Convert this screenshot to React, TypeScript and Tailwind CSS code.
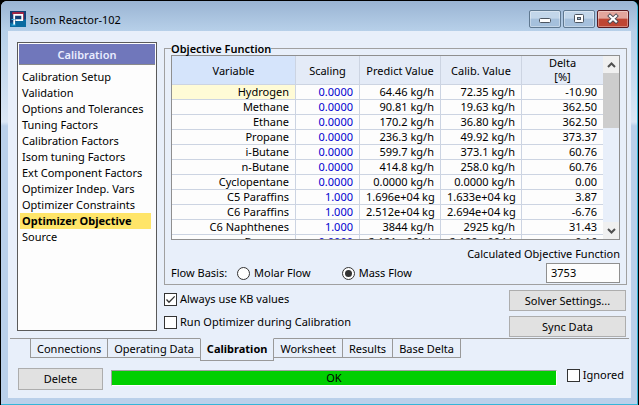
import { useState, type ReactNode } from "react";

const MENU = [
  "Calibration Setup",
  "Validation",
  "Options and Tolerances",
  "Tuning Factors",
  "Calibration Factors",
  "Isom tuning Factors",
  "Ext Component Factors",
  "Optimizer Indep. Vars",
  "Optimizer Constraints",
  "Optimizer Objective",
  "Source",
];

const ROWS = [
  ["Hydrogen", "0.0000", "64.46 kg/h", "72.35 kg/h", "-10.90"],
  ["Methane", "0.0000", "90.81 kg/h", "19.63 kg/h", "362.50"],
  ["Ethane", "0.0000", "170.2 kg/h", "36.80 kg/h", "362.50"],
  ["Propane", "0.0000", "236.3 kg/h", "49.92 kg/h", "373.37"],
  ["i-Butane", "0.0000", "599.7 kg/h", "373.1 kg/h", "60.76"],
  ["n-Butane", "0.0000", "414.8 kg/h", "258.0 kg/h", "60.76"],
  ["Cyclopentane", "0.0000", "0.0000 kg/h", "0.0000 kg/h", "0.00"],
  ["C5 Paraffins", "1.000", "1.696e+04 kg", "1.633e+04 kg", "3.87"],
  ["C6 Paraffins", "1.000", "2.512e+04 kg", "2.694e+04 kg", "-6.76"],
  ["C6 Naphthenes", "1.000", "3844 kg/h", "2925 kg/h", "31.43"],
  ["Benzene", "0.0000", "2.121e-004 k", "2.120e-004 k", "0.16"],
];

const TABS = ["Connections", "Operating Data", "Calibration", "Worksheet", "Results", "Base Delta"];

function CheckBox({ label, checked = false }: { label: string; checked?: boolean }) {
  return (
    <label className="flex items-center gap-[3px]">
      <span className="grid size-[13px] shrink-0">
        <input
          type="checkbox"
          defaultChecked={checked}
          className="peer m-0 size-[13px] appearance-none border border-[#333] bg-white [grid-area:1/1]"
        />
        <svg
          viewBox="0 0 13 13"
          className="pointer-events-none invisible size-[13px] [grid-area:1/1] peer-checked:visible"
          fill="none"
          stroke="#333"
          strokeWidth="1.3"
        >
          <path d="M2.5 6.5 5 9.2 10.7 3.4" />
        </svg>
      </span>
      {label}
    </label>
  );
}

function Radio({ label, checked = false }: { label: string; checked?: boolean }) {
  return (
    <label className="flex items-center gap-1">
      <span className="grid size-[13px] shrink-0 place-items-center">
        <input
          type="radio"
          name="flow-basis"
          defaultChecked={checked}
          className="peer m-0 size-[13px] appearance-none rounded-full border border-[#333] bg-white [grid-area:1/1]"
        />
        <span className="pointer-events-none invisible size-[7px] rounded-full bg-[#333] [grid-area:1/1] peer-checked:visible" />
      </span>
      {label}
    </label>
  );
}

function PushButton({ children, className }: { children: ReactNode; className: string }) {
  return (
    <button type="button" className={`border border-[#adadad] bg-[#e1e1e1] text-center ${className}`}>
      {children}
    </button>
  );
}

function TitleButton({ label, danger = false, children }: { label: string; danger?: boolean; children: ReactNode }) {
  const skin = danger
    ? "border-[#5a1a20] bg-linear-to-b from-[#e3a59c] from-45% to-[#bf4634] to-50%"
    : "border-[#5f7890] bg-linear-to-b from-[#c2d6ea] from-45% to-[#a5c0dc] to-50%";
  return (
    <button
      type="button"
      aria-label={label}
      className={`flex h-[18px] w-8 items-center justify-center rounded-xs border shadow-[inset_0_0_0_1px_rgba(255,255,255,0.35)] ${skin}`}
    >
      {children}
    </button>
  );
}

function TitleBar() {
  return (
    <header className="flex h-[30px] items-start rounded-t-md bg-linear-to-b from-[#9ab4d3] to-[#b7d0e9] pt-[9px] pr-2 pl-[9px]">
      <svg viewBox="0 0 16 16" className="mt-px mr-1 size-4">
        <rect width="16" height="16" fill="#123f76" />
        <path d="M0 12 16 8v8H0z" fill="#0b6ba0" />
        <path d="M3 3.5V2h10v7" fill="none" stroke="#c8203a" strokeWidth="1.4" />
        <path d="M4.2 14V3.8h8v5.4H5.5" fill="none" stroke="#fff" strokeWidth="1.8" />
        <path d="M1.5 8.5h3M1.5 14h4" stroke="#35b6e8" strokeWidth="1.2" />
      </svg>
      <h1 className="mt-px flex-1 leading-[18px]">Isom Reactor-102</h1>
      <div className="flex gap-0.5">
        <TitleButton label="Minimize">
          <svg viewBox="0 0 12 6" className="mt-1 h-1.5 w-3">
            <rect x="0.5" y="0.5" width="11" height="4" rx="1" fill="#fff" stroke="#4c5560" />
          </svg>
        </TitleButton>
        <TitleButton label="Maximize">
          <svg viewBox="0 0 12 10" className="h-2.5 w-3">
            <rect x="1.5" y="0.5" width="9" height="8" rx="1" fill="#fff" stroke="#4c5560" />
            <rect x="4.5" y="3.5" width="3" height="2" fill="#9fb8d0" stroke="#4c5560" />
          </svg>
        </TitleButton>
        <TitleButton label="Close" danger>
          <svg viewBox="0 0 14 12" className="h-3 w-3.5" strokeLinecap="square">
            <path d="m4 3 6 5.5M10 3 4 8.500" stroke="#4c4a55" strokeWidth="4" />
            <path d="m4 3 6 5.5M10 3 4 8.500" stroke="#fff" strokeWidth="2.2" />
          </svg>
        </TitleButton>
      </div>
    </header>
  );
}

function Sidebar() {
  const [current, setCurrent] = useState("Optimizer Objective");
  return (
    <nav className="mb-1.5 w-[140px] shrink-0 border border-[#5a5a5a] bg-[#fdfdfd] p-px">
      <h2 className="h-[21px] border-b border-[#8a8a8a] bg-[#7077bb] text-center leading-[21px] font-semibold text-[#e9ecff]">
        Calibration
      </h2>
      <ul className="pt-1 pr-1 pl-px">
        {MENU.map((item) => (
          <li key={item}>
            <button
              type="button"
              onClick={() => setCurrent(item)}
              className={`block h-4 w-full pl-0.5 text-left leading-4 whitespace-nowrap ${item === current ? "bg-[#ffe569] font-bold" : ""}`}
            >
              {item}
            </button>
          </li>
        ))}
      </ul>
    </nav>
  );
}

function ObjectiveTable() {
  const head = "border-r border-b border-[#ccd4e2] p-0 font-normal leading-[15px]";
  const cell = "border-r border-b border-[#ccd4e2] p-0 pr-1.5 pl-1.5 whitespace-nowrap overflow-hidden";
  return (
    <div className="flex h-[185px] border border-[#8f8f8f] bg-[#fdfdfd]">
      <div className="min-w-0 flex-1 overflow-hidden">
        <table className="w-full table-fixed border-separate border-spacing-0 text-right leading-[14px]">
          <colgroup>
            <col />
            <col className="w-16" />
            <col className="w-[81px]" />
            <col className="w-[81px]" />
            <col className="w-[81px]" />
          </colgroup>
          <thead className="bg-[#e4ebf7] text-center">
            <tr className="h-[29px]">
              <th className={`${head} bg-[#d5e4fb]`}>Variable</th>
              <th className={head}>Scaling</th>
              <th className={head}>Predict Value</th>
              <th className={head}>Calib. Value</th>
              <th className="border-b border-[#ccd4e2] p-0 leading-[14px] font-normal">
                Delta
                <br />
                [%]
              </th>
            </tr>
          </thead>
          <tbody>
            {ROWS.map(([name, scaling, predict, calib, delta], i) => (
              <tr key={name}>
                <td className={`${cell} ${i === 0 ? "bg-[#fffbd6]" : ""}`}>{name}</td>
                <td className={`${cell} text-[#0000d0]`}>{scaling}</td>
                <td className={cell}>{predict}</td>
                <td className={cell}>{calib}</td>
                <td className="border-b border-[#ccd4e2] p-0 pr-1.5">{delta}</td>
              </tr>
            ))}
          </tbody>
        </table>
      </div>
      <div className="flex w-4 flex-col bg-[#e8effa]">
        <button type="button" aria-label="Scroll up" className="flex h-[17px] items-center justify-center bg-[#f0f0f0]">
          <svg viewBox="0 0 9 6" className="h-1.5 w-[9px]" fill="none" stroke="#505050" strokeWidth="2">
            <path d="m1 5 3.5-3.5L8 5" />
          </svg>
        </button>
        <div className="h-[55px] bg-[#cdcdcd]" />
        <div className="flex-1" />
        <button type="button" aria-label="Scroll down" className="flex h-[17px] items-center justify-center bg-[#f0f0f0]">
          <svg viewBox="0 0 9 6" className="h-1.5 w-[9px]" fill="none" stroke="#505050" strokeWidth="2">
            <path d="m1 1 3.5 3.5L8 1" />
          </svg>
        </button>
      </div>
    </div>
  );
}

function ObjectivePanel() {
  return (
    <section className="min-w-0 flex-1">
      <fieldset className="min-w-0 border border-[#a0a0a0] px-1.5 pb-px">
        <legend className="h-[13px] leading-[13px] font-semibold">Objective Function</legend>
        <ObjectiveTable />
        <div className="flex items-end justify-between pt-[7px]">
          <div className="flex items-center pb-[3px] leading-[14px]">
            <span className="w-[66px]">Flow Basis:</span>
            <div className="flex gap-[31px]">
              <Radio label="Molar Flow" />
              <Radio label="Mass Flow" checked />
            </div>
          </div>
          <div className="flex flex-col items-end gap-0.5 leading-[14px]">
            <label htmlFor="objective">Calculated Objective Function</label>
            <input
              id="objective"
              defaultValue="3753"
              className="h-5 w-[74px] border border-[#8f8f8f] bg-[#fdfdfd] px-1 pb-0.5 leading-[14px]"
            />
          </div>
        </div>
      </fieldset>
      <div className="flex justify-between pt-[5px]">
        <div className="flex flex-col gap-[9px] pt-[2px] leading-[14px]">
          <CheckBox label="Always use KB values" checked />
          <CheckBox label="Run Optimizer during Calibration" />
        </div>
        <div className="flex flex-col gap-[5px] pr-px">
          <PushButton className="h-[21px] w-[117px]">Solver Settings...</PushButton>
          <PushButton className="h-[21px] w-[117px]">Sync Data</PushButton>
        </div>
      </div>
    </section>
  );
}

function TabStrip() {
  const [active, setActive] = useState("Calibration");
  return (
    <div role="tablist" className="flex items-start px-0.5 leading-[14px]">
      <div className="w-5 border-t border-[#999]" />
      {TABS.map((tab, i) => {
        const on = tab === active;
        const afterActive = TABS[i - 1] === active;
        const skin = on
          ? "h-[23px] border-x border-t border-t-transparent pt-px pb-0.5 font-bold"
          : afterActive
            ? "h-5 border-t pt-px"
            : "h-5 border-t border-l pt-px";
        const last = i === TABS.length - 1 ? "border-r" : "";
        return (
          <button
            key={tab}
            type="button"
            role="tab"
            aria-selected={on}
            onClick={() => setActive(tab)}
            className={`border-b border-[#999] px-1.5 whitespace-nowrap ${skin} ${last}`}
          >
            {tab}
          </button>
        );
      })}
      <div className="flex-1 border-t border-[#999]" />
    </div>
  );
}

export default function App() {
  return (
    <div
      className="w-full bg-black p-px text-[11px] leading-[14px] text-black"
      style={{ fontFamily: '"Noto Sans", "Open Sans", sans-serif' }}
    >
      <div className="rounded-t-md border-r border-b border-[#35b5d8] bg-linear-to-b from-[#b7d0e9] from-8% via-[#dbe7f5] via-30% to-[#bad0ea] to-31%">
        <TitleBar />
        <main className="mr-1.5 mb-1.5 ml-[7px] bg-[#e8effa] pt-[11px] pb-2">
          <div className="flex gap-[7px] pr-1 pl-[9px]">
            <Sidebar />
            <ObjectivePanel />
          </div>
          <div className="pt-px">
            <TabStrip />
          </div>
          <footer className="flex items-start pt-[7px] pr-[7px] pl-2.5">
            <PushButton className="h-[22px] w-[85px]">Delete</PushButton>
            <div
              role="status"
              className="mt-0.5 mr-2.5 ml-2 h-4 flex-1 border border-t-[#a0a0a0] border-r-white border-b-white border-l-[#a0a0a0] bg-[#00cf00] text-center leading-[14px]"
            >
              OK
            </div>
            <CheckBox label="Ignored" />
          </footer>
        </main>
      </div>
    </div>
  );
}
